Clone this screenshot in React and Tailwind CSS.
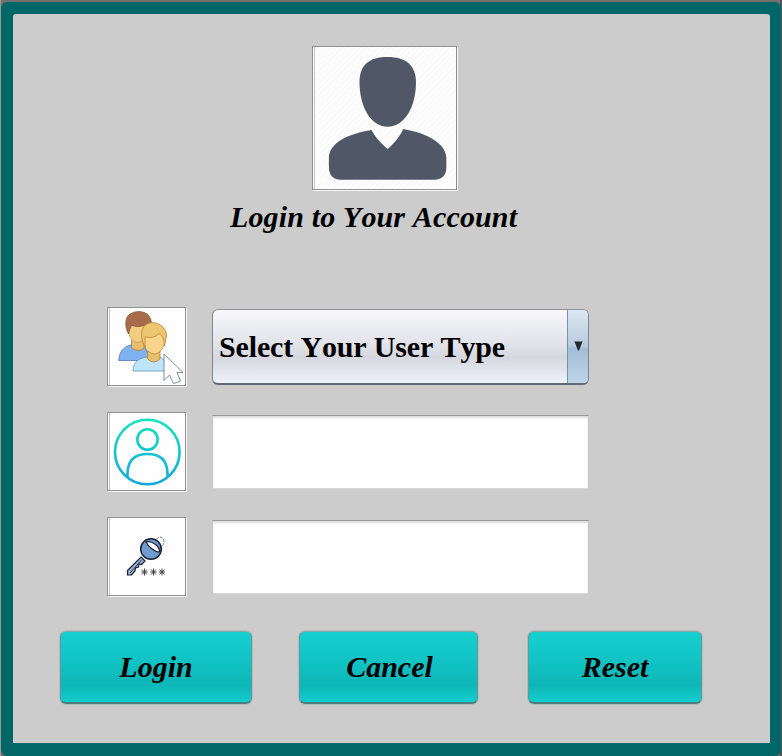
import React from "react";

function Framed({ className, children }) {
  return (
    <div className={"shrink-0 border border-[#909090] bg-[#fefefe] shadow-[1px_1px_0_#f8f8f8,inset_1px_0_0_#fff,inset_2px_0_0_#c4c4c4] " + className}>
      {children}
    </div>
  );
}

function Avatar() {
  return (
    <svg viewBox="313 47 143 143" className="block h-full w-full">
      <defs>
        <pattern id="hatch" width="6" height="6" patternUnits="userSpaceOnUse">
          <path d="M-1 7L7 -1" stroke="#f3f3f3" strokeWidth="1" />
        </pattern>
      </defs>
      <rect x="315" y="47" width="141" height="143" fill="url(#hatch)" />
      <path d="M359.300 82C359.500 65 369 57 387.500 57S416.200 65 416.200 83C416 107 405 127.300 387.500 127.300S359.300 106 359.300 82Z" fill="#505867" />
      <path d="M371.500 130.500C376 139 381 144 387.800 149.600C394 144 400 137 403.500 129.500C428 134 446.800 144 446.800 159V168C446.800 177 442 180.800 432 180.800H343C333 180.800 328.500 177 328.500 167V159C328.500 143 349 134 371.500 130.500Z" fill="#505867" />
    </svg>
  );
}

function UsersIcon() {
  return (
    <svg viewBox="108 308 77 77" className="block h-full w-full" strokeLinejoin="round">
      <path d="M118.800 360.500C119 350 126 345.500 133 344.500L144 345L151 360.500Z" fill="#7fb2f0" stroke="#4b78bd" strokeWidth=".8" />
      <path d="M131.500 339V348Q139 353 144 348V339Z" fill="#e6bd6a" stroke="#a87833" strokeWidth=".7" />
      <path d="M129 325C128 337 131 341 137 342.500Q146 342 148 331V322H132Z" fill="#f3cd82" stroke="#c69753" strokeWidth=".7" />
      <path d="M128.500 334C124.500 327 124.500 316 131 313.500C139 309 151 312 151.500 323L146 325Q138 328 131.500 325.500L129.500 330Z" fill="#a96c4a" stroke="#82513a" strokeWidth=".7" />
      <path d="M133 371C133 361 140 358 147 357H159C163 358 165 360 166 371Z" fill="#bfe5fd" stroke="#609abf" strokeWidth=".8" />
      <path d="M147.500 351V359Q154 365 160 359V351Z" fill="#e6bd6a" stroke="#a87833" strokeWidth=".7" />
      <path d="M144 337C143 347 147 353 154.500 354C162 353 165.500 345 165 335L158 331L145 334Z" fill="#f8d48b" stroke="#b98338" strokeWidth=".7" />
      <path d="M145 347C139.500 338 140.500 326 148 323.500C156 320 167 327 166.500 336L164.500 346C164 339 163 336 159 333.500Q154 339 145 337Z" fill="#eec66f" stroke="#b98338" strokeWidth=".8" />
      <path d="M164 354V380.500L169.500 375L173.500 383.500L180.500 381L177 372.500H183Z" fill="#fff" stroke="#71809a" strokeWidth=".9" />
    </svg>
  );
}

function ProfileIcon() {
  return (
    <svg viewBox="108 413 77 77" className="block h-full w-full" fill="none" stroke="url(#aqua)" strokeWidth="2.600">
      <defs>
        <linearGradient id="aqua" gradientUnits="userSpaceOnUse" x1="0" y1="418" x2="0" y2="486">
          <stop offset="0" stopColor="#12e4bd" />
          <stop offset="1" stopColor="#14a5df" />
        </linearGradient>
      </defs>
      <circle cx="147.300" cy="452" r="32.300" />
      <circle cx="147.500" cy="439.500" r="10.200" />
      <path d="M127.500 477V473C128 459 136 454 147.500 454S167 459 167.500 473V477" />
    </svg>
  );
}

function KeyIcon() {
  return (
    <svg viewBox="108 518 77 77" className="block h-full w-full">
      <path d="M156.500 539C159 535.500 164 537 164 541.500C164 545 162 546.500 160.500 546" fill="none" stroke="#777c84" strokeDasharray="3 1" />
      <path d="M141 557L145 561L141.500 564.500L139 564L138.500 567L135.500 568L135 571L131.500 575H127.500V570.500Z" fill="#99b0d0" stroke="#192033" strokeWidth="1.200" />
      <path d="M141.500 560L130 573" stroke="#27344d" strokeWidth="1" />
      <circle cx="151" cy="549" r="10.300" fill="#719ccf" stroke="#192033" strokeWidth="1.500" />
      <path d="M146 542C152 540.500 160 546 159.500 552C154 552 148 546 146 542Z" fill="#fff" stroke="#192033" strokeWidth="1.200" />
      {[144.5, 153.5, 162].map((x) => (
        <path key={x} transform={`translate(${x} 572)`} d="M0 -3.500V3.500M-3.200 0H3.200M-2.500 -2.500L2.500 2.500M2.500 -2.500L-2.500 2.500" stroke="#454548" strokeWidth="1" />
      ))}
    </svg>
  );
}

function Row({ icon, children }) {
  return (
    <div className="flex h-[79px] gap-[26px]">
      <Framed className="h-[79px] w-[79px]">{icon}</Framed>
      {children}
    </div>
  );
}

function TextField({ type, label }) {
  return (
    <input
      type={type}
      aria-label={label}
      className="mt-[3px] h-[74px] w-[377px] border border-[#c6c6c6] border-t-[#999] border-b-[#d6d6d6] bg-white px-2 text-[30px] font-bold shadow-[inset_0_2px_2px_#dedede] outline-none"
    />
  );
}

function Action({ className, children }) {
  return (
    <button className={"h-[73px] rounded-[6px] border border-t-[#8fa5a5] border-x-[#63999a] border-b-2 border-b-[#4d7f80] bg-[linear-gradient(#17d0d0_0%,#10c0c1_50%,#0eb6b7_74%,#14d0d1_100%)] bg-origin-border text-[30px] leading-none font-bold italic shadow-[0_0_0_1px_#b4bebe] " + className}>
      {children}
    </button>
  );
}

export default function App() {
  return (
    <div className="h-[756px] w-[782px] bg-[linear-gradient(90deg,#999_0,#999_1px,#766f6b_1px,#77706c_780px,#555_780px)] pt-[2px] pr-px pl-px font-['Liberation_Serif',serif] text-black [font-kerning:none]">
      <div className="h-[754px] rounded-[6px] bg-[#006768] pt-[12px] pr-[11px] pl-[12px]">
        <main className="flex h-[729px] flex-col rounded-t-[3px] bg-[#ccc]">
          <Framed className="mt-[32px] ml-[299px] h-[144px] w-[145px]"><Avatar /></Framed>
          <h1 className="mt-[12px] ml-[217px] h-[30px] text-[30px] leading-[30px] font-bold tracking-[0.14px] whitespace-nowrap italic">Login to Your Account</h1>
          <form className="mt-[75px] ml-[94px] flex flex-col gap-[26px]" onSubmit={(e) => e.preventDefault()}>
            <Row icon={<UsersIcon />}>
              <button type="button" className="mt-[2px] flex h-[76px] w-[377px] overflow-hidden rounded-[6px] border border-t-[#8f929a] border-x-[#7f858f] border-b-2 border-b-[#616975] bg-[linear-gradient(#f8f8fb_0%,#e1e3e8_47%,#d5d8df_65%,#edf1fa_100%)] text-[30px] font-bold">
                <span className="flex h-full grow items-center pl-[6px] leading-none tracking-[-0.15px] whitespace-nowrap">Select Your User Type</span>
                <span className="flex h-full w-[21px] items-center justify-center border-l border-[#7890a9] bg-[linear-gradient(#dce8f2_0%,#b6cbdd_49%,#a2bdd4_53%,#bed5e8_100%)]">
                  <svg width="9" height="11" viewBox="0 0 9 11">
                    <path d="M.5 .5H8.500L5 9.500H4Z" fill="#22282d" />
                    <path d="M.5 .5H8.500" stroke="#6c7c89" />
                  </svg>
                </span>
              </button>
            </Row>
            <Row icon={<ProfileIcon />}><TextField type="text" label="Username" /></Row>
            <Row icon={<KeyIcon />}><TextField type="password" label="Password" /></Row>
          </form>
          <div className="mt-[35px] ml-[47px] flex">
            <Action className="w-[192px]">Login</Action>
            <Action className="ml-[47px] w-[179px] pl-[2px]">Cancel</Action>
            <Action className="ml-[50px] w-[174px]">Reset</Action>
          </div>
        </main>
      </div>
    </div>
  );
}
